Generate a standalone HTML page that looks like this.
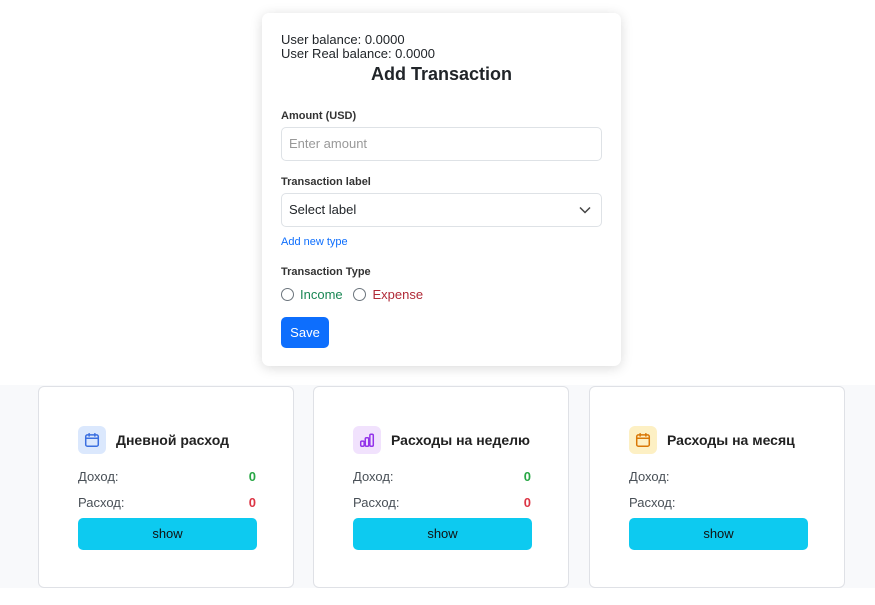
<!DOCTYPE html>
<html><head><meta charset="utf-8"><style>
*{box-sizing:border-box;margin:0;padding:0}
body{width:875px;height:605px;background:#fff;font-family:"Liberation Sans","DejaVu Sans",sans-serif;color:#212529;position:relative;overflow:hidden}
.modal{position:absolute;left:262px;top:13px;width:359px;height:353px;background:#fff;border-radius:7px;box-shadow:0 2px 12px rgba(0,0,0,.15);padding:20px 19px;z-index:2}
.bal{font-size:13px;line-height:14px}
h2{text-align:center;font-size:18px;font-weight:bold;margin-top:2px;line-height:22px}
label.l{display:block;font-size:11px;font-weight:bold;color:#333}
.inp{border:1px solid #dee2e6;border-radius:5px;height:34px;padding:0 7px;font-size:13px;line-height:32px;position:relative}
.bottom{position:absolute;left:0;top:385px;width:875px;height:203px;background:#f8f9fb}
.card{position:absolute;top:386px;width:256px;height:202px;background:#fff;border:1px solid #dfe1e6;border-radius:6px}
.ic{position:absolute;left:39px;top:39px;width:28px;height:28px;border-radius:6px;display:flex;align-items:center;justify-content:center}
.ttl{position:absolute;left:77px;top:45px;font-size:14px;font-weight:bold;color:#222}
.row{position:absolute;left:39px;right:37px;font-size:13px;color:#495057;display:flex;justify-content:space-between}
.btn{position:absolute;left:39px;top:131px;width:179px;height:32px;background:#0dcaf0;border-radius:5px;text-align:center;line-height:32px;font-size:13px;color:#111}
.g{color:#28a745;font-weight:bold}.r{color:#dc3545;font-weight:bold}
.radio{display:inline-block;width:13px;height:13px;border:1px solid #6c757d;border-radius:50%;vertical-align:-2px;margin-right:6px}
</style></head><body>
<div class="bottom"></div>
<div class="modal">
<div class="bal">User balance: 0.0000<br>User Real balance: 0.0000</div>
<h2>Add Transaction</h2>
<label class="l" style="margin-top:25px">Amount (USD)</label>
<div class="inp" style="margin-top:5px;color:#999">Enter amount</div>
<label class="l" style="margin-top:15px">Transaction label</label>
<div class="inp" style="margin-top:5px">Select label<svg style="position:absolute;right:10px;top:12px" width="12" height="8" viewBox="0 0 12 8"><path d="M1 1.5l5 5 5-5" fill="none" stroke="#444" stroke-width="1.5"/></svg></div>
<div style="font-size:11px;color:#0d6efd;margin-top:9px">Add new type</div>
<label class="l" style="margin-top:18px">Transaction Type</label>
<div style="font-size:13px;margin-top:9px"><span class="radio"></span><span style="color:#198754">Income</span>&nbsp;&nbsp;&nbsp;<span class="radio"></span><span style="color:#b02a37">Expense</span></div>
<div style="margin-top:15px;width:48px;height:31px;background:#0d6efd;color:#fff;border-radius:5px;font-size:13px;line-height:31px;text-align:center">Save</div>
</div>

<div class="card" style="left:38px">
<div class="ic" style="background:#dbe8fd"><svg width="16" height="16" viewBox="0 0 14 14" fill="none" stroke="#3b6fe0" stroke-width="1.3"><rect x="1.5" y="2.5" width="11" height="10" rx="1.5"/><path d="M1.5 5.5h11M4.5 1v3M9.5 1v3"/></svg></div>
<div class="ttl">Дневной расход</div>
<div class="row" style="top:82px"><span>Доход:</span><span class="g">0</span></div>
<div class="row" style="top:108px"><span>Расход:</span><span class="r">0</span></div>
<div class="btn">show</div>
</div>
<div class="card" style="left:313px">
<div class="ic" style="background:#f1e2fd"><svg width="16" height="16" viewBox="0 0 14 14" fill="none" stroke="#9333ea" stroke-width="1.3"><rect x="1.5" y="8" width="3" height="4.5" rx="1"/><rect x="5.5" y="5" width="3" height="7.5" rx="1"/><rect x="9.5" y="2" width="3" height="10.5" rx="1"/></svg></div>
<div class="ttl">Расходы на неделю</div>
<div class="row" style="top:82px"><span>Доход:</span><span class="g">0</span></div>
<div class="row" style="top:108px"><span>Расход:</span><span class="r">0</span></div>
<div class="btn">show</div>
</div>
<div class="card" style="left:589px">
<div class="ic" style="background:#fdf0c4"><svg width="16" height="16" viewBox="0 0 14 14" fill="none" stroke="#d97706" stroke-width="1.3"><rect x="1.5" y="2.5" width="11" height="10" rx="1.5"/><path d="M1.5 5.5h11M4.5 1v3M9.5 1v3"/></svg></div>
<div class="ttl">Расходы на месяц</div>
<div class="row" style="top:82px"><span>Доход:</span><span></span></div>
<div class="row" style="top:108px"><span>Расход:</span><span></span></div>
<div class="btn">show</div>
</div>
</body></html>
